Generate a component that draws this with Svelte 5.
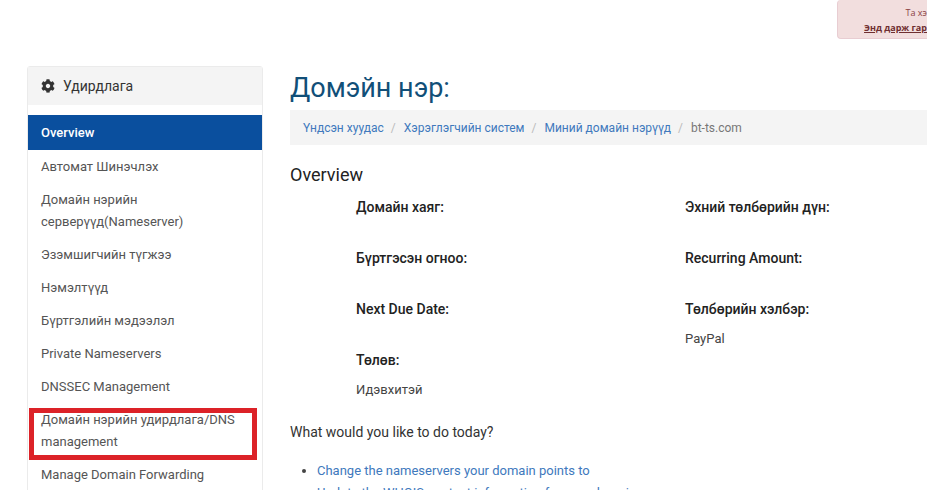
<script>
  const menu = [
    'Автомат Шинэчлэх',
    'Домайн нэрийн серверүүд(Nameserver)',
    'Эзэмшигчийн түгжээ',
    'Нэмэлтүүд',
    'Бүртгэлийн мэдээлэл',
    'Private Nameservers',
    'DNSSEC Management',
    'Домайн нэрийн удирдлага/DNS management',
    'Manage Domain Forwarding',
  ];
  const marked = 7;
  const crumbs = ['Үндсэн хуудас', 'Хэрэглэгчийн систем', 'Миний домайн нэрүүд'];
  const columns = [
    [
      { label: 'Домайн хаяг:', value: '' },
      { label: 'Бүртгэсэн огноо:', value: '' },
      { label: 'Next Due Date:', value: '' },
      { label: 'Төлөв:', value: 'Идэвхитэй' },
    ],
    [
      { label: 'Эхний төлбөрийн дүн:', value: '' },
      { label: 'Recurring Amount:', value: '' },
      { label: 'Төлбөрийн хэлбэр:', value: 'PayPal' },
    ],
  ];
  const actions = [
    'Change the nameservers your domain points to',
    'Update the WHOIS contact information for your domain',
  ];
</script>

<div class="page">
  <div class="alert">
    <span>Та хэ</span>
    <a href="#admin">Энд дарж гар</a>
  </div>

  <div class="layout">
    <aside class="panel">
      <h2>
        <svg viewBox="0 0 512 512" width="14" height="14" aria-hidden="true">
          <path
            fill="#333"
            d="M487.4 315.7l-42.6-24.6c4.3-23.2 4.3-47 0-70.2l42.6-24.6c4.9-2.8 7.1-8.6 5.5-14-11.1-35.6-30-67.8-54.7-94.6-3.8-4.1-10-5.1-14.8-2.3L380.8 110c-17.9-15.4-38.5-27.3-60.8-35.1V25.8c0-5.6-3.9-10.5-9.4-11.7-36.7-8.2-74.3-7.8-109.2 0-5.5 1.2-9.4 6.1-9.4 11.7V75c-22.2 7.9-42.8 19.8-60.8 35.1L88.7 85.5c-4.9-2.8-11-1.9-14.8 2.3-24.7 26.7-43.6 58.9-54.7 94.6-1.7 5.4.6 11.2 5.5 14L67.3 221c-4.3 23.2-4.3 47 0 70.2l-42.6 24.6c-4.9 2.8-7.1 8.6-5.5 14 11.1 35.6 30 67.8 54.7 94.6 3.8 4.1 10 5.1 14.8 2.3l42.6-24.6c17.9 15.4 38.5 27.3 60.8 35.1v49.2c0 5.6 3.9 10.5 9.4 11.7 36.7 8.2 74.3 7.8 109.2 0 5.5-1.2 9.4-6.1 9.4-11.7v-49.2c22.2-7.9 42.8-19.8 60.8-35.1l42.6 24.6c4.9 2.8 11 1.9 14.8-2.3 24.7-26.7 43.6-58.9 54.7-94.6 1.5-5.5-.7-11.3-5.6-14.1zM256 336c-44.100 0-80-35.900-80-80s35.900-80 80-80 80 35.900 80 80-35.900 80-80 80z"
          />
        </svg>
        Удирдлага
      </h2>
      <nav>
        <a class="item active" href="#overview">Overview</a>
        {#each menu as item, i}
          <a class="item" class:marked={i === marked} href="#item-{i}">{item}</a>
        {/each}
      </nav>
    </aside>

    <main>
      <h1>Домэйн нэр:</h1>
      <ol class="crumbs">
        {#each crumbs as crumb}
          <li><a href="#crumb">{crumb}</a></li>
        {/each}
        <li>bt-ts.com</li>
      </ol>

      <h3>Overview</h3>
      <div class="details">
        {#each columns as column}
          <dl>
            {#each column as row}
              <div class="row">
                <dt>{row.label}</dt>
                {#if row.value}<dd>{row.value}</dd>{/if}
              </div>
            {/each}
          </dl>
        {/each}
      </div>

      <h4>What would you like to do today?</h4>
      <ul class="actions">
        {#each actions as action}
          <li><a href="#action">{action}</a></li>
        {/each}
      </ul>
    </main>
  </div>
</div>

<style>
  :global(body) {
    margin: 0;
    background: #fff;
  }
  .page {
    position: relative;
    height: 100vh;
    overflow: hidden;
    font-family: Roboto, 'Liberation Sans', sans-serif;
    font-size: 13px;
    line-height: 22px;
    color: #444;
  }
  a {
    color: #4079bd;
    text-decoration: none;
  }
  h1, h2, h3, h4, dl, dd, ol, ul {
    margin: 0;
    padding: 0;
    font-weight: 400;
  }
  .alert {
    position: absolute;
    top: 0;
    right: 0;
    box-sizing: border-box;
    width: 90px;
    height: 39px;
    padding-top: 5px;
    display: flex;
    flex-direction: column;
    align-items: flex-end;
    font: 9px/15px 'Open Sans', sans-serif;
    white-space: nowrap;
    color: #8a4143;
    background: #f2dede;
    border: 1px solid #e8cdd2;
    border-width: 0 0 1px 1px;
    border-radius: 4px 0 0 4px;
  }
  .alert a {
    font-weight: 700;
    color: #6f2f31;
    text-decoration: underline;
  }
  .layout {
    display: flex;
    gap: 27px;
    padding: 66px 0 0 27px;
  }
  .panel {
    flex: 0 0 236px;
    box-sizing: border-box;
    border: 1px solid #ebebeb;
    border-radius: 3px;
  }
  .panel h2 {
    display: flex;
    align-items: center;
    gap: 8px;
    height: 38px;
    padding-left: 13px;
    font-size: 14px;
    color: #333;
    background: #f4f4f4;
  }
  nav {
    padding: 10px 0;
  }
  .item {
    position: relative;
    display: block;
    padding: 5px 13px 6px;
    color: #555;
  }
  .item.active {
    margin-bottom: 1px;
    padding: 7px 13px 6px;
    color: #fff;
    background: #0a4f9e;
    font-weight: 500;
  }
  .marked::after {
    content: '';
    position: absolute;
    inset: 4px 5px -1px 1px;
    border: 5px solid #dc2228;
  }
  main {
    flex: 1;
    min-width: 0;
  }
  h1 {
    font-size: 27px;
    line-height: 44px;
    color: #114f78;
  }
  .crumbs {
    display: flex;
    padding: 7px 13px 6px;
    font-size: 12px;
    list-style: none;
    color: #777;
    background: #f4f4f4;
  }
  .crumbs li + li::before {
    content: '/';
    padding: 0 8px 0 7px;
    color: #bbb;
  }
  h3 {
    margin-top: 19px;
    font-size: 18px;
    color: #222;
  }
  .details {
    display: grid;
    grid-template-columns: 329px 1fr;
    padding: 10px 0 0 66px;
  }
  .row {
    min-height: 51px;
  }
  dt {
    font-size: 14px;
    font-weight: 500;
    color: #222;
  }
  dd {
    padding-top: 8px;
  }
  h4 {
    margin-top: 20px;
    font-size: 14px;
    color: #333;
  }
  .actions {
    margin-top: 17px;
    padding-left: 27px;
  }
</style>
